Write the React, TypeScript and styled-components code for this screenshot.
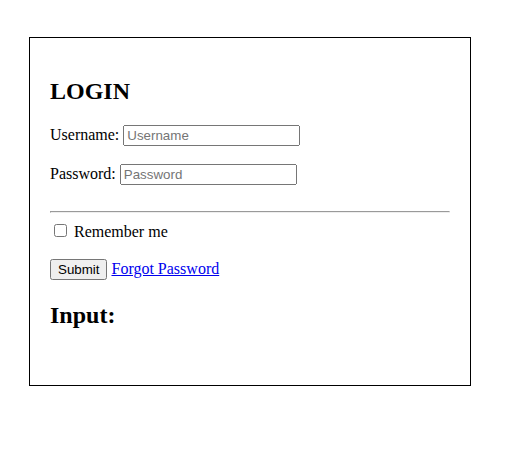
import React from 'react';
import styled, { createGlobalStyle } from 'styled-components';

const GlobalStyle = createGlobalStyle`
  body {
    margin: 8px;
    background: #ffffff;
    font-family: "Liberation Serif", "Times New Roman", serif;
    font-size: 16px;
    color: #000000;
  }
`;

const App: React.FC = () => {
  return (
    <>
      <GlobalStyle />
      <Container>
        <Title>LOGIN</Title>
        <Row>
          Username: <TextInput type="text" placeholder="Username" />
        </Row>
        <Row>
          Password: <TextInput type="password" placeholder="Password" />
        </Row>
        <Divider />
        <CheckRow>
          <Check type="checkbox" /> Remember me
        </CheckRow>
        <Row>
          <SubmitButton type="button">Submit</SubmitButton>{' '}
          <Link href="#">Forgot Password</Link>
        </Row>
        <Title>Input:</Title>
        <Output />
      </Container>
    </>
  );
};
export default App;

const Container = styled.form`
  width: 400px;
  margin: 29px 0 0 21px;
  padding: 20px;
  border: solid 1px #000000;
`;
const Title = styled.h2`
  font-size: 24px;
  font-weight: bold;
  margin: 20px 0;
`;
const Row = styled.p`
  margin: 16px 0;
  padding-bottom: 2px;
`;
const TextInput = styled.input`
  box-sizing: border-box;
  width: 177px;
  height: 21px;
  font-family: "Liberation Sans", Arial, sans-serif;
  font-size: 13.33px;
`;
const Divider = styled.hr`
  margin: 24px 0 8px;
`;
const CheckRow = styled.label`
  display: block;
  padding-bottom: 2px;
`;
const Check = styled.input`
  margin: 3px 3px 3px 4px;
`;
const SubmitButton = styled.button`
  font-family: "Liberation Sans", Arial, sans-serif;
  font-size: 13.33px;
`;
const Link = styled.a`
  color: #0000ee;
`;
const Output = styled.div`
  height: 16px;
`;
